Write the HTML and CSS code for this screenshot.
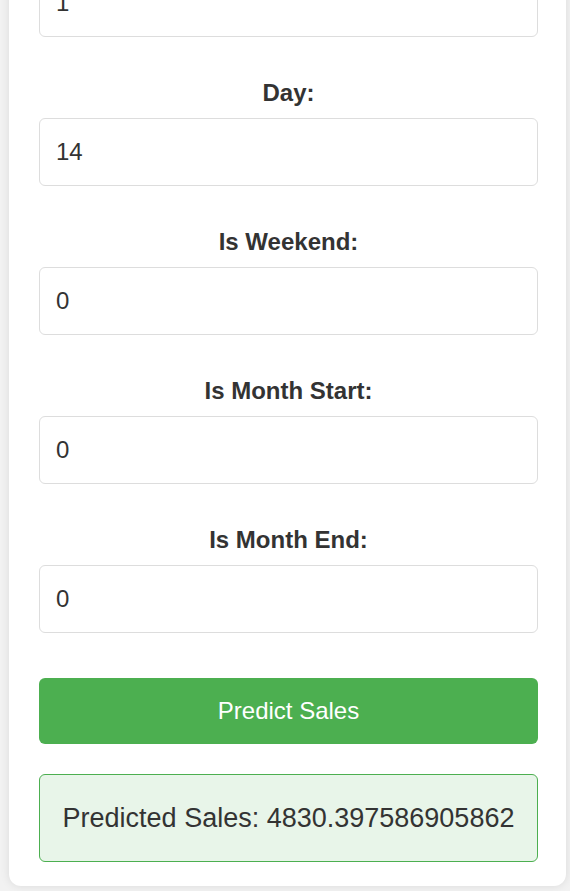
FILE: index.html
```html
<!DOCTYPE html>
<html lang="en">
<head>
<meta charset="utf-8">
<title>Sales Prediction</title>
<link rel="stylesheet" href="styles.css">
</head>
<body>
<div class="page">
  <form class="card">
    <div class="field first">
      <input class="input" type="text" value="1">
    </div>
    <div class="field">
      <label class="label">Day:</label>
      <input class="input" type="text" value="14">
    </div>
    <div class="field">
      <label class="label">Is Weekend:</label>
      <input class="input" type="text" value="0">
    </div>
    <div class="field">
      <label class="label">Is Month Start:</label>
      <input class="input" type="text" value="0">
    </div>
    <div class="field">
      <label class="label">Is Month End:</label>
      <input class="input" type="text" value="0">
    </div>
    <button class="btn" type="button">Predict Sales</button>
    <div class="result">Predicted Sales: 4830.397586905862</div>
  </form>
</div>
</body>
</html>
```

FILE: styles.css
```css
html, body {
  margin: 0;
  padding: 0;
  background: #f2f2f2;
  font-family: "Liberation Sans", Arial, sans-serif;
  color: #333;
  overflow: hidden;
}

.page {
  padding: 0 4px 5px 9px;
}

.card {
  margin-top: -31px;
  background: #fff;
  border-radius: 12px;
  box-shadow: 0 0 10px rgba(0, 0, 0, 0.1);
  padding: 0 28px 24px 30px;
  display: flex;
  flex-direction: column;
}

.field {
  display: flex;
  flex-direction: column;
  margin-top: 42px;
}

.field.first {
  margin-top: 0;
}

.label {
  display: block;
  text-align: center;
  font-weight: bold;
  font-size: 24px;
  line-height: 28px;
  margin-bottom: 11px;
  color: #333;
}

.input {
  box-sizing: border-box;
  width: 100%;
  height: 68px;
  padding: 0 16px;
  border: 1px solid #ddd;
  border-radius: 6px;
  font-family: "Liberation Sans", Arial, sans-serif;
  font-size: 24px;
  color: #333;
  background: #fff;
  outline: none;
}

.btn {
  margin-top: 45px;
  height: 66px;
  width: 100%;
  border: none;
  border-radius: 6px;
  background: #4caf50;
  color: #fff;
  font-family: "Liberation Sans", Arial, sans-serif;
  font-size: 24px;
  cursor: pointer;
}

.result {
  box-sizing: border-box;
  margin-top: 30px;
  height: 88px;
  border: 1px solid #4caf50;
  border-radius: 6px;
  background: #e8f5e9;
  font-size: 27px;
  display: flex;
  align-items: center;
  justify-content: center;
  color: #333;
}
```
